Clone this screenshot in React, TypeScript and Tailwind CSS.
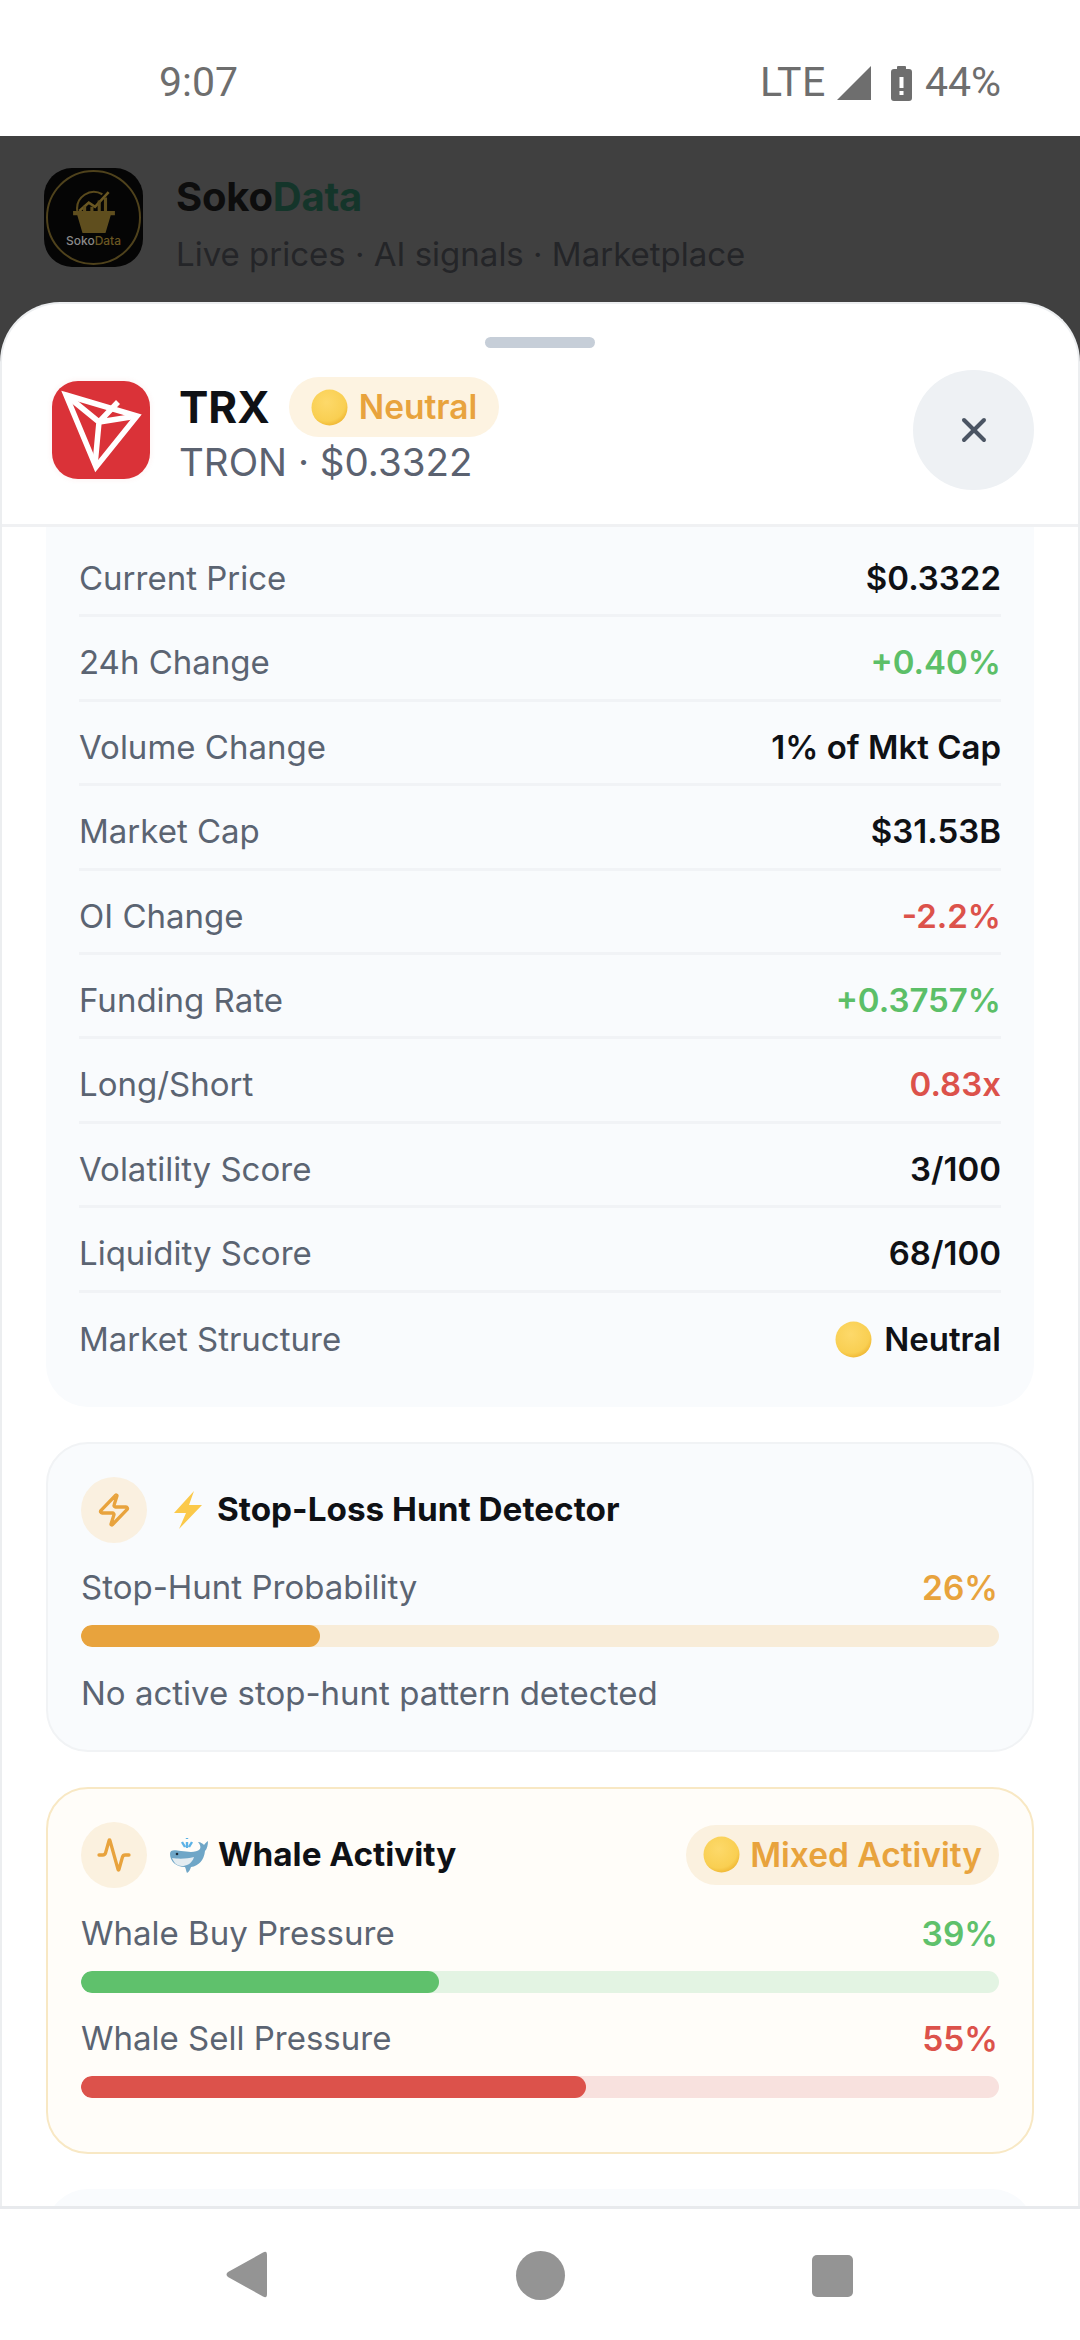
import { X, Zap, Activity } from 'lucide-react'

const rows = [
  { label: 'Current Price', value: '$0.3322', color: 'text-[#0f1115]' },
  { label: '24h Change', value: '+0.40%', color: 'text-[#5cbf68]' },
  { label: 'Volume Change', value: '1% of Mkt Cap', color: 'text-[#0f1115]' },
  { label: 'Market Cap', value: '$31.53B', color: 'text-[#0f1115]' },
  { label: 'OI Change', value: '-2.2%', color: 'text-[#dc524b]' },
  { label: 'Funding Rate', value: '+0.3757%', color: 'text-[#5cbf68]' },
  { label: 'Long/Short', value: '0.83x', color: 'text-[#dc524b]' },
  { label: 'Volatility Score', value: '3/100', color: 'text-[#0f1115]' },
  { label: 'Liquidity Score', value: '68/100', color: 'text-[#0f1115]' },
]

// yellow circle emoji
function Coin() {
  return (
    <svg width="37" height="37" viewBox="0 0 36 36" className="shrink-0">
      <defs>
        <radialGradient id="coinFill" cx="0.42" cy="0.35" r="0.7">
          <stop offset="0" stopColor="#fdd96a" />
          <stop offset="0.75" stopColor="#f9cf52" />
          <stop offset="1" stopColor="#eeb32e" />
        </radialGradient>
      </defs>
      <circle cx="18" cy="18" r="17.5" fill="url(#coinFill)" />
    </svg>
  )
}

function BoltEmoji() {
  return (
    <svg width="32" height="38" viewBox="0 0 32 38" className="shrink-0">
      <path d="M22 0 L2 22 L14 22 L7 38 L30 14 L17 14 Z" fill="#fbc94a" />
    </svg>
  )
}

function WhaleEmoji() {
  return (
    <svg width="40" height="36" viewBox="0 0 40 36" className="shrink-0">
      <path d="M1 17 C1 12 6 13 12 14 C20 15 27 16 31 12 C32 10 31 7 29 5 C32 5 34 7 35 8 C36 7 37 5 39 4 C39 8 38 12 36 14 C35 23 30 29 22 30 C21 33 20 35 18 36 C17 34 17 32 16 30 C7 30 1 24 1 17 Z" fill="#6fa6c7" />
      <path d="M3 21 C9 22 18 22 25 20 C23 27 17 29 13 29 C8 29 5 26 3 21 Z" fill="#e3ecf1" />
      <circle cx="8" cy="17" r="1.3" fill="#1f2d3a" />
      <path d="M18 11 L18 5 M13 5 L16 10 M23 5 L20 10 M18 2 L18 1" stroke="#5cb2e6" strokeWidth="2.4" fill="none" />
    </svg>
  )
}

function Meter({ label, value, valueColor, fill, track, pct }: { label: string; value: string; valueColor: string; fill: string; track: string; pct: number }) {
  return (
    <div>
      <div className="flex items-center justify-between h-[40px] pr-[1px]">
        <span className="text-[33px] text-[#5b6472]">{label}</span>
        <span className={`text-[33.5px] font-semibold ${valueColor}`}>{value}</span>
      </div>
      <div className={`h-[22px] rounded-full overflow-hidden mt-[17px] ${track}`}>
        <div className={`h-full rounded-full ${fill}`} style={{ width: `${pct}%` }} />
      </div>
    </div>
  )
}

export default function App() {
  return (
    <div className="w-[1080px] h-[2340px] flex flex-col overflow-hidden bg-[#404040] font-['Inter',sans-serif]">
      {/* status bar */}
      <div className="h-[136px] shrink-0 bg-white flex items-center justify-between pl-[159px] pr-[79px] pt-[30px] font-['Roboto',sans-serif] text-[41px] text-[#6e6e6e]">
        <span>9:07</span>
        <div className="flex items-center">
          <span className="tracking-[0.5px]">LTE</span>
          <svg width="34" height="34" viewBox="0 0 34 34" className="ml-[11px]">
            <path d="M34 0 V34 H0 Z" fill="#6e6e6e" />
          </svg>
          <svg width="21" height="35" viewBox="0 0 21 35" className="ml-[20px]">
            <path d="M6 3 V1 Q6 0 7 0 H14 Q15 0 15 1 V3 H18 Q21 3 21 6 V32 Q21 35 18 35 H3 Q0 35 0 32 V6 Q0 3 3 3 Z" fill="#6e6e6e" />
            <rect x="8.5" y="11" width="4" height="11" fill="#fff" />
            <rect x="8.5" y="25" width="4" height="4" fill="#fff" />
          </svg>
          <span className="ml-[13px]">44%</span>
        </div>
      </div>

      {/* app header behind the sheet */}
      <div className="h-[166px] shrink-0 flex items-start pl-[44px] pt-[32px]">
        <div className="w-[99px] h-[99px] rounded-[28px] bg-[#050505] flex items-center justify-center">
          <div className="w-[95px] h-[95px] rounded-full border-2 border-[#4f421c] flex flex-col items-center justify-center">
            <svg width="46" height="46" viewBox="0 0 44 44">
              <path d="M6 22 A16 16 0 0 1 30 6" stroke="#5a4a1c" strokeWidth="2" fill="none" />
              <path d="M8 22 L17 14 L23 18 L36 4" stroke="#6b5822" strokeWidth="2.5" fill="none" />
              <path d="M2 22 H42 V26 H38 L33 43 H11 L6 26 H2 Z" fill="#5f4e1e" />
              <path d="M13 22 V17 M20 22 V18 M27 22 V12 M33 22 V9" stroke="#5f4e1e" strokeWidth="3" />
            </svg>
            <span className="text-[12px] leading-[14px] font-medium text-[#8a8a8a]">
              Soko<span className="text-[#6a5722]">Data</span>
            </span>
          </div>
        </div>
        <div className="ml-[33px] flex flex-col">
          <span className="text-[40px] leading-[48px] font-bold tracking-[-0.2px] text-[#0d0d0d] mt-[5px]">
            Soko<span className="text-[#14352a]">Data</span>
          </span>
          <span className="text-[33px] leading-[40px] text-[#242528] mt-[13px]">Live prices · AI signals · Marketplace</span>
        </div>
      </div>

      {/* sheet */}
      <div className="flex-1 min-h-0 flex flex-col bg-white rounded-t-[60px] border-x-2 border-t-2 border-[#eceef0]">
        <div className="flex justify-center pt-[33px] shrink-0">
          <div className="w-[110px] h-[11px] rounded-full bg-[#c6ced8]" />
        </div>
        <div className="shrink-0 flex items-center pl-[50px] pr-[44px] pt-[22px] pb-[34px] border-b-[3px] border-[#f0f1f3]">
          <div className="w-[98px] h-[98px] rounded-[26px] bg-[#da3238] shrink-0 shadow-[0_0_6px_rgba(218,50,56,0.08)]">
            <svg width="98" height="98" viewBox="0 0 98 98" fill="none" stroke="#fff" strokeWidth="5.5">
              <path d="M14 14 L85 35 L44 86 Z" strokeLinejoin="miter" />
              <path d="M14 14 L47 41 L85 35 M47 41 L66 21 M47 41 L43 84" />
            </svg>
          </div>
          <div className="ml-[29px] flex-1 min-w-0">
            <div className="flex items-center h-[60px] pt-[1px]">
              <span className="text-[44px] font-bold text-[#0f1115]">TRX</span>
              <div className="ml-[19px] h-[60px] pl-[22px] pr-[22px] rounded-full bg-[#fdf3e1] flex items-center gap-[11px]">
                <Coin />
                <span className="text-[33.5px] font-semibold text-[#e8a33d]">Neutral</span>
              </div>
            </div>
            <div className="text-[38.5px] leading-[44px] text-[#5b6270] mt-[3px]">TRON · $0.3322</div>
          </div>
          <div className="w-[121px] h-[120px] rounded-full bg-[#eef1f4] flex items-center justify-center shrink-0">
            <X size={40} strokeWidth={2.4} className="text-[#4b5563]" />
          </div>
        </div>

        <div className="flex-1 min-h-0 overflow-hidden px-[44px] flex flex-col gap-[35px]">
          {/* metrics */}
          <div className="shrink-0 bg-[#f9fbfd] rounded-b-[42px] px-[33px] pt-[6px] pb-[30px]">
            {rows.map((r) => (
              <div key={r.label} className="h-[84.4px] flex items-center justify-between pt-[10px] border-b-[3px] border-[#f1f3f6]">
                <span className="text-[33px] text-[#5b6472]">{r.label}</span>
                <span className={`text-[33px] font-semibold ${r.color}`}>{r.value}</span>
              </div>
            ))}
            <div className="h-[84.4px] flex items-center justify-between pt-[10px]">
              <span className="text-[33px] text-[#5b6472]">Market Structure</span>
              <span className="flex items-center gap-[12px] text-[33px] font-semibold text-[#0f1115]">
                <Coin />
                Neutral
              </span>
            </div>
          </div>

          {/* stop-loss hunt */}
          <div className="shrink-0 h-[310px] bg-[#f9fbfd] border-2 border-[#f1f3f5] rounded-[42px] px-[33px] pt-[33px]">
            <div className="flex items-center h-[66px]">
              <div className="w-[66px] h-[66px] rounded-full bg-[#faf0e0] flex items-center justify-center shrink-0">
                <Zap size={36} strokeWidth={2.2} className="text-[#e8a33d]" />
              </div>
              <span className="ml-[25px]"><BoltEmoji /></span>
              <span className="ml-[13px] text-[33.3px] font-bold text-[#0f1115]">Stop-Loss Hunt Detector</span>
            </div>
            <div className="mt-[25px]">
              <Meter label="Stop-Hunt Probability" value="26%" valueColor="text-[#e8a33d]" fill="bg-[#e8a33d]" track="bg-[#f8ecd8]" pct={26} />
            </div>
            <div className="mt-[26px] text-[33px] leading-[40px] text-[#5b6472]">No active stop-hunt pattern detected</div>
          </div>

          {/* whale activity */}
          <div className="shrink-0 h-[367px] bg-[#fffdf9] border-2 border-[#f8e8c4] rounded-[42px] px-[33px] pt-[33px]">
            <div className="flex items-center h-[66px]">
              <div className="w-[66px] h-[66px] rounded-full bg-[#fbf1df] flex items-center justify-center shrink-0">
                <Activity size={36} strokeWidth={2.2} className="text-[#e8a33d]" />
              </div>
              <span className="ml-[22px]"><WhaleEmoji /></span>
              <span className="ml-[9px] text-[33.3px] font-bold text-[#0f1115]">Whale Activity</span>
              <div className="ml-auto h-[60px] pl-[17px] pr-[17px] rounded-full bg-[#fbf1df] flex items-center gap-[10px]">
                <Coin />
                <span className="text-[33.5px] font-semibold text-[#e8a33d]">Mixed Activity</span>
              </div>
            </div>
            <div className="mt-[26px] flex flex-col gap-[26px]">
              <Meter label="Whale Buy Pressure" value="39%" valueColor="text-[#5fc16c]" fill="bg-[#5fc16c]" track="bg-[#e3f4e3]" pct={39} />
              <Meter label="Whale Sell Pressure" value="55%" valueColor="text-[#dc524b]" fill="bg-[#dc524b]" track="bg-[#f8e1de]" pct={55} />
            </div>
          </div>

          <div className="shrink-0 h-[200px] bg-[#f9fbfd] rounded-[42px]" />
        </div>
      </div>

      {/* nav bar */}
      <div className="h-[134px] shrink-0 bg-white border-t-[3px] border-[#e8eaed] flex items-start pt-[42px] pl-[226px]">
        <svg width="41" height="47" viewBox="0 0 41 47">
          <path d="M37 1.5 Q41 -1 41 4 V43 Q41 48 37 45.5 L2 26 Q-1 23.5 2 21 Z" fill="#949494" />
        </svg>
        <div className="ml-[249px] w-[49px] h-[49px] rounded-full bg-[#949494]" />
        <div className="ml-[247px] mt-[4px] w-[41px] h-[42px] rounded-[5px] bg-[#949494]" />
      </div>
    </div>
  )
}
